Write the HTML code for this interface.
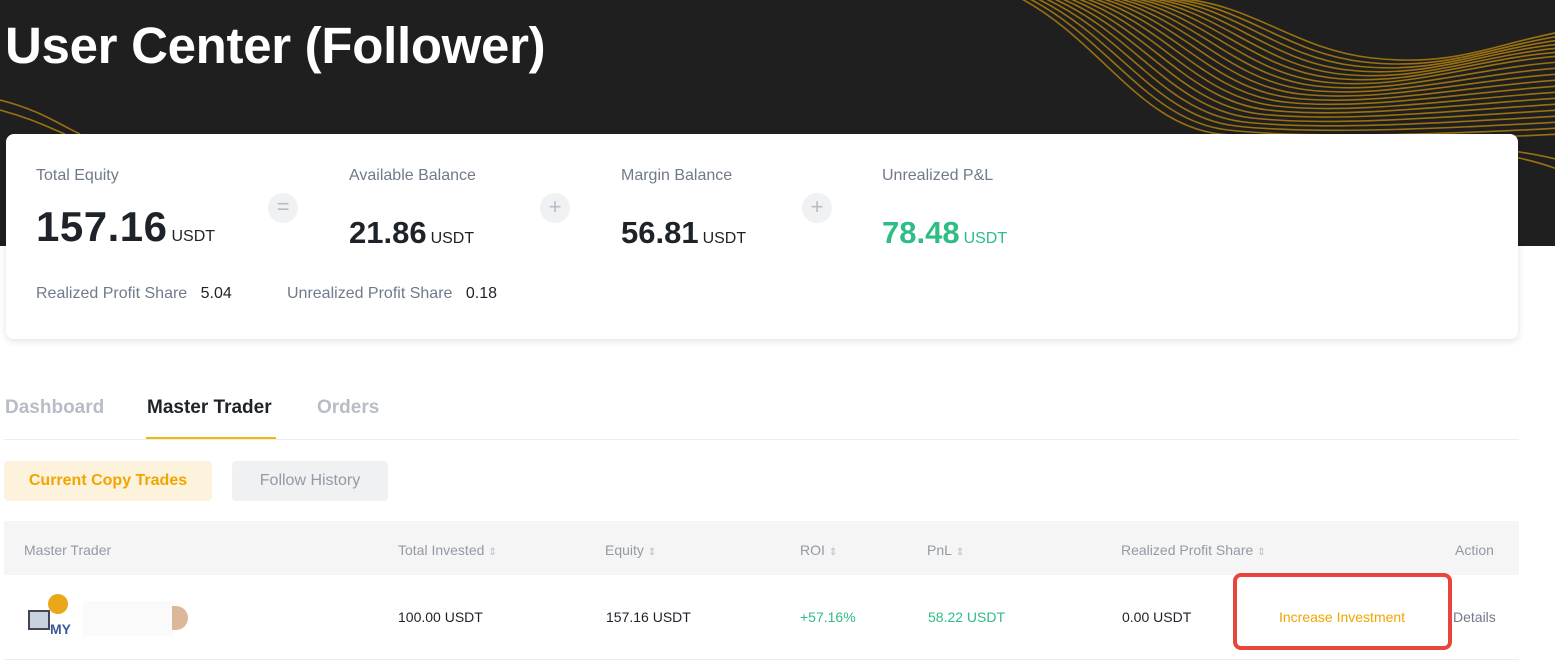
<!DOCTYPE html>
<html><head><meta charset="utf-8"><style>
*{margin:0;padding:0;box-sizing:border-box}
body{width:1555px;height:662px;overflow:hidden;background:#fff;font-family:"Liberation Sans",sans-serif;position:relative;color:#1e2329}
.hdr{position:absolute;left:0;top:0;width:1555px;height:246px;background:#1f1f1f;overflow:hidden}
h1{position:absolute;left:5px;top:16px;color:#fff;font-size:51px;font-weight:bold;letter-spacing:-0.3px}
.card{position:absolute;left:6px;top:134px;width:1512px;height:205px;background:#fff;border-radius:8px;box-shadow:0 2px 8px rgba(0,0,0,.12)}
.lbl{position:absolute;font-size:16px;color:#707a8a}
.val{position:absolute;font-weight:bold;color:#1e2329}
.u{font-size:16px;font-weight:normal;margin-left:4px}
.op{position:absolute;width:30px;height:30px;border-radius:50%;background:#f0f1f3;color:#b7bdc6;text-align:center;line-height:28px;font-size:22px}
.tab{position:absolute;top:397px;font-size:19px;font-weight:bold;color:#b7bdc6}
.t{position:absolute;font-size:14px;color:#1e2329}
.th{position:absolute;top:542px;font-size:14px;color:#929aa5}
.s{font-size:10px;color:#b7bdc6;margin-left:4px}
</style></head><body>
<div class="hdr">
<svg width="1555" height="246" style="position:absolute;left:0;top:0">
<g fill="none" stroke="#a87a10" stroke-width="1.6" opacity=".9">
<path d="M1020 -2 C1100 40 1140 125 1220 134 S1450 140 1560 134"/>
<path d="M1028 -2 C1108 38 1148 121 1228 130 S1452 134 1560 128"/>
<path d="M1036 -2 C1116 36 1156 117 1236 126 S1454 128 1560 122"/>
<path d="M1044 -2 C1124 34 1164 113 1244 122 S1456 122 1560 116"/>
<path d="M1052 -2 C1132 32 1172 109 1252 118 S1458 116 1560 110"/>
<path d="M1060 -2 C1140 30 1180 105 1260 114 S1460 110 1560 104"/>
<path d="M1068 -2 C1148 28 1188 101 1268 110 S1462 104 1560 98"/>
<path d="M1076 -2 C1156 26 1196 97 1276 106 S1464 98 1560 92"/>
<path d="M1084 -2 C1164 24 1204 93 1284 102 S1466 92 1560 86"/>
<path d="M1092 -2 C1172 22 1212 89 1292 98 S1468 86 1560 80"/>
<path d="M1100 -2 C1180 20 1220 85 1300 94 S1470 80 1560 74"/>
<path d="M1108 -2 C1188 18 1228 81 1308 90 S1472 74 1560 68"/>
<path d="M1116 -2 C1196 16 1236 77 1316 86 S1474 68 1560 62"/>
<path d="M1124 -2 C1204 14 1244 73 1324 82 S1476 62 1560 56"/>
<path d="M1132 -2 C1212 12 1252 69 1332 78 S1478 58 1560 52"/>
<path d="M1140 -2 C1220 10 1260 65 1340 74 S1480 55 1560 48"/>
<path d="M1148 -2 C1228 8 1268 61 1348 70 S1482 52 1560 44"/>
<path d="M1156 -2 C1236 6 1276 57 1356 66 S1484 50 1560 40"/>
<path d="M1164 -2 C1244 4 1284 53 1364 62 S1486 48 1560 36"/>
<path d="M1172 -2 C1252 2 1292 49 1372 58 S1488 46 1560 32"/>
<path d="M1400 140 C1470 145 1520 150 1560 160"/>
<path d="M1420 146 C1480 150 1520 155 1560 170"/>
<path d="M0 100 C40 110 60 125 80 134"/>
<path d="M0 110 C30 118 50 128 65 134"/>
</g></svg>
<h1>User Center (Follower)</h1>
</div>
<div class="card">
<div class="lbl" style="left:30px;top:33px">Total Equity</div>
<div class="val" style="left:30px;top:69px;font-size:42px;letter-spacing:0.5px">157.16<span class="u" style="letter-spacing:0">USDT</span></div>
<div class="op" style="left:262px;top:59px">=</div>
<div class="lbl" style="left:343px;top:33px">Available Balance</div>
<div class="val" style="left:343px;top:81px;font-size:31px">21.86<span class="u">USDT</span></div>
<div class="op" style="left:534px;top:59px">+</div>
<div class="lbl" style="left:615px;top:33px">Margin Balance</div>
<div class="val" style="left:615px;top:81px;font-size:31px">56.81<span class="u">USDT</span></div>
<div class="op" style="left:796px;top:59px">+</div>
<div class="lbl" style="left:876px;top:33px">Unrealized P&amp;L</div>
<div class="val" style="left:876px;top:81px;font-size:31px;color:#2ebd85">78.48<span class="u" style="color:#2ebd85">USDT</span></div>
<div class="lbl" style="left:30px;top:151px">Realized Profit Share <span style="color:#1e2329;margin-left:9px">5.04</span></div>
<div class="lbl" style="left:281px;top:151px">Unrealized Profit Share <span style="color:#1e2329;margin-left:9px">0.18</span></div>
</div>
<div class="tab" style="left:5px">Dashboard</div>
<div class="tab" style="left:147px;color:#1e2329">Master Trader</div>
<div class="tab" style="left:317px">Orders</div>
<div style="position:absolute;left:146px;top:437px;width:130px;height:3px;background:#f0b90b"></div>
<div style="position:absolute;left:4px;top:439px;width:1515px;height:1px;background:#eaecef"></div>
<div style="position:absolute;left:4px;top:461px;width:208px;height:40px;background:#fdf3dc;border-radius:4px;color:#f0a500;font-weight:bold;font-size:16px;text-align:center;line-height:40px">Current Copy Trades</div>
<div style="position:absolute;left:232px;top:461px;width:156px;height:40px;background:#f0f1f3;border-radius:4px;color:#929aa5;font-size:16px;text-align:center;line-height:40px">Follow History</div>
<div style="position:absolute;left:4px;top:521px;width:1515px;height:54px;background:#f5f5f5"></div>
<div class="th" style="left:24px">Master Trader</div>
<div class="th" style="left:398px">Total Invested<span class="s">⇕</span></div>
<div class="th" style="left:605px">Equity<span class="s">⇕</span></div>
<div class="th" style="left:800px">ROI<span class="s">⇕</span></div>
<div class="th" style="left:927px">PnL<span class="s">⇕</span></div>
<div class="th" style="left:1121px">Realized Profit Share<span class="s">⇕</span></div>
<div class="th" style="left:1455px">Action</div>
<div style="position:absolute;left:26px;top:594px;width:48px;height:46px">
<div style="position:absolute;left:22px;top:0;width:20px;height:20px;border-radius:50%;background:#e8a818"></div>
<div style="position:absolute;left:2px;top:16px;width:22px;height:20px;background:#c9d2dc;border:2px solid #445"></div>
<div style="position:absolute;left:24px;top:27px;font-size:14px;font-weight:bold;color:#3a5a9a">MY</div>
</div>
<div style="position:absolute;left:83px;top:601px;width:90px;height:35px;background:#fafafa"></div>
<div style="position:absolute;left:172px;top:606px;width:16px;height:24px;border-radius:0 12px 12px 0;background:#dbb89a"></div>
<div class="t" style="left:398px;top:609px">100.00 USDT</div>
<div class="t" style="left:606px;top:609px">157.16 USDT</div>
<div class="t" style="left:800px;top:609px;color:#2ebd85">+57.16%</div>
<div class="t" style="left:928px;top:609px;color:#2ebd85">58.22 USDT</div>
<div class="t" style="left:1122px;top:609px">0.00 USDT</div>
<div class="t" style="left:1279px;top:609px;color:#f0a500">Increase Investment</div>
<div class="t" style="left:1453px;top:609px;color:#707a8a">Details</div>
<div style="position:absolute;left:1233px;top:573px;width:219px;height:77px;border:4px solid #e8453c;border-radius:8px"></div>
<div style="position:absolute;left:4px;top:659px;width:1515px;height:1px;background:#eaecef"></div>
</body></html>
